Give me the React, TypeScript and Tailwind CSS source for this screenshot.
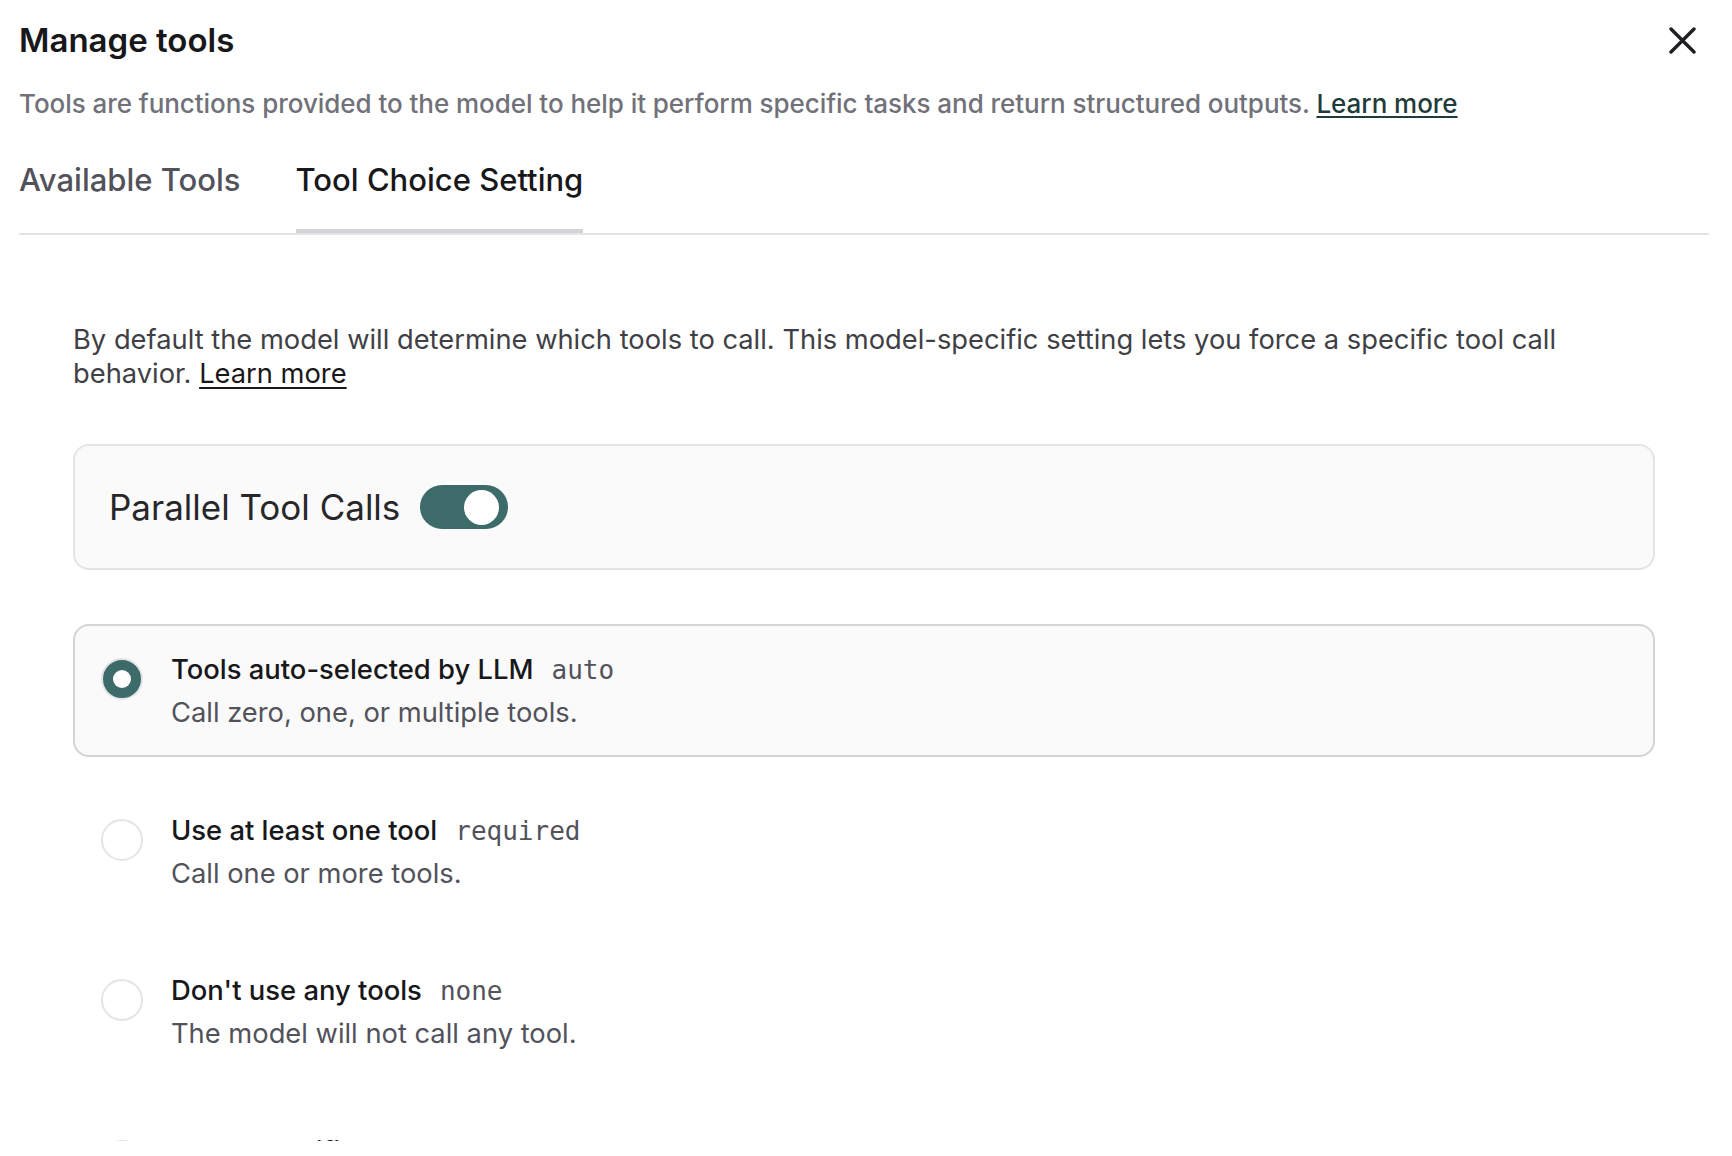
import { useState } from "react";

type ToolChoice = "auto" | "required" | "none" | "specific";

type Choice = {
  value: ToolChoice;
  title: string;
  code: string;
  description: string;
};

const choices: Choice[] = [
  {
    value: "auto",
    title: "Tools auto-selected by LLM",
    code: "auto",
    description: "Call zero, one, or multiple tools.",
  },
  {
    value: "required",
    title: "Use at least one tool",
    code: "required",
    description: "Call one or more tools.",
  },
  {
    value: "none",
    title: "Don't use any tools",
    code: "none",
    description: "The model will not call any tool.",
  },
  {
    value: "specific",
    title: "Use a specific tool",
    code: "function",
    description: "Force the model to call the selected tool.",
  },
];

const tabs = ["Available Tools", "Tool Choice Setting"];

function CloseIcon() {
  return (
    <svg width="27" height="27" viewBox="0 0 27 27" fill="none">
      <path
        d="M2 2L25 25M25 2L2 25"
        stroke="#1f1f23"
        strokeWidth="3.4"
        strokeLinecap="round"
      />
    </svg>
  );
}

function Radio({ checked }: { checked: boolean }) {
  return (
    <span
      className={
        checked
          ? "mt-[10px] flex h-[42px] w-[42px] shrink-0 items-center justify-center rounded-full border-2 border-[#e4e4e7] bg-[#3d6b69]"
          : "mt-[10px] flex h-[42px] w-[42px] shrink-0 items-center justify-center rounded-full border-2 border-[#e4e4e7] bg-white"
      }
    >
      {checked ? (
        <span className="h-[18px] w-[18px] rounded-full bg-white" />
      ) : null}
    </span>
  );
}

export default function App() {
  const [activeTab, setActiveTab] = useState("Tool Choice Setting");
  const [parallel, setParallel] = useState(true);
  const [choice, setChoice] = useState<ToolChoice>("auto");

  return (
    <div className="h-[1156px] w-full bg-white font-[family-name:Inter,sans-serif]">
      <div className="ml-[19px] flex h-[1141px] w-[1690px] flex-col overflow-hidden">
        <header className="flex items-center justify-between pt-[20px]">
          <h1 className="text-[33px] leading-[40px] font-semibold text-[#18181b]">
            Manage tools
          </h1>
          <button className="mr-[13px]" type="button" aria-label="Close">
            <CloseIcon />
          </button>
        </header>

        <p className="mt-[28px] text-[26px] leading-[32px] font-medium tracking-[-0.05px] text-[#71717a]">
          Tools are functions provided to the model to help it perform specific
          tasks and return structured outputs.{" "}
          <a className="text-[#1f3b3b] underline decoration-2 underline-offset-[3px]" href="#">
            Learn more
          </a>
        </p>

        <div className="mt-[41px] flex gap-[55px] border-b-2 border-[#e4e4e7]">
          {tabs.map((tab) => (
            <button
              key={tab}
              type="button"
              onClick={() => setActiveTab(tab)}
              className={
                tab === activeTab
                  ? "border-b-4 border-[#d4d4d8] pb-[30px] text-[31px] leading-[38px] font-medium text-[#18181b]"
                  : "border-b-4 border-transparent pb-[30px] text-[31px] leading-[38px] font-medium text-[#52525b]"
              }
            >
              {tab}
            </button>
          ))}
        </div>

        <div className="pr-[54px] pl-[54px]">
          <p className="mt-[88px] text-[27.3px] leading-[34px] text-[#3f3f46]">
            By default the model will determine which tools to call. This
            model-specific setting lets you force a specific tool call behavior.{" "}
            <a className="text-[#18181b] underline decoration-2 underline-offset-[4px]" href="#">
              Learn more
            </a>
          </p>

          <div className="mt-[53px] flex h-[126px] items-center gap-[20px] rounded-2xl border-2 border-[#e4e4e7] bg-[#fafafa] pl-[34px]">
            <span className="text-[35px] text-[#27272a]">Parallel Tool Calls</span>
            <button
              type="button"
              role="switch"
              aria-checked={parallel}
              onClick={() => setParallel(!parallel)}
              className={
                parallel
                  ? "flex h-[44px] w-[88px] items-center rounded-full bg-[#3d6b69] px-[9px]"
                  : "flex h-[44px] w-[88px] items-center rounded-full bg-[#d4d4d8] px-[9px]"
              }
            >
              <span
                className={
                  parallel
                    ? "h-[35px] w-[35px] translate-x-[35px] rounded-full bg-white"
                    : "h-[35px] w-[35px] rounded-full bg-white"
                }
              />
            </button>
          </div>

          <div className="mt-[54px] flex flex-col gap-[27.5px]">
            {choices.map((item) => {
              const checked = item.value === choice;
              return (
                <label
                  key={item.value}
                  onClick={() => setChoice(item.value)}
                  className={
                    checked
                      ? "flex cursor-pointer items-start rounded-2xl border-2 border-[#d4d4d8] bg-[#fafafa] pt-[22px] pb-[21px] pl-[26px]"
                      : "flex cursor-pointer items-start rounded-2xl border-2 border-transparent pt-[22px] pb-[21px] pl-[26px]"
                  }
                >
                  <Radio checked={checked} />
                  <div className="ml-[28px]">
                    <div className="flex items-baseline gap-[18px]">
                      <span className="text-[27.4px] leading-[43px] font-medium text-[#18181b]">
                        {item.title}
                      </span>
                      <code className="font-[family-name:'DejaVu_Sans_Mono',monospace] text-[26px] text-[#52525b]">
                        {item.code}
                      </code>
                    </div>
                    <p className="text-[27.3px] leading-[43px] text-[#52525b]">
                      {item.description}
                    </p>
                  </div>
                </label>
              );
            })}
          </div>
        </div>
      </div>
    </div>
  );
}
